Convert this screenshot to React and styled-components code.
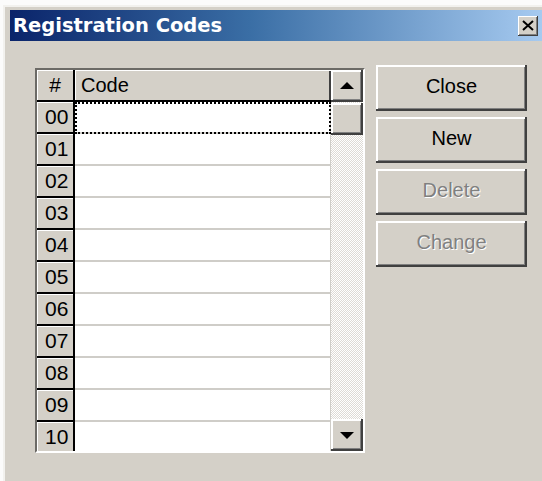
import React from "react";
import styled, { createGlobalStyle } from "styled-components";

const FACE = "#d4d0c8";

const codes = ["00", "01", "02", "03", "04", "05", "06", "07", "08", "09", "10"];

const GlobalStyle = createGlobalStyle`
  html, body {
    margin: 0;
    padding: 0;
    background: #fbfbfb;
    overflow: hidden;
  }
  body {
    font-family: "Liberation Sans", Arial, sans-serif;
  }
`;

const App = () => {
  return (
    <>
      <GlobalStyle />
      <Window>
        <TitleBar>
          <Title>Registration Codes</Title>
          <CloseBox>
            <svg width="12" height="11" viewBox="0 0 12 11">
              <path d="M1 1 L11 10 M11 1 L1 10" stroke="#000" strokeWidth="2" />
            </svg>
          </CloseBox>
        </TitleBar>
        <Body>
          <Grid>
            <Table>
              <Row>
                <Fixed $header>#</Fixed>
                <HeaderCell>Code</HeaderCell>
              </Row>
              {codes.map((c, i) => (
                <Row key={c}>
                  <Fixed>{c}</Fixed>
                  <Cell $focused={i === 0} />
                </Row>
              ))}
            </Table>
            <ScrollBar>
              <ScrollButton>
                <Arrow $up />
              </ScrollButton>
              <Thumb />
              <Track />
              <ScrollButton>
                <Arrow />
              </ScrollButton>
            </ScrollBar>
          </Grid>
          <Buttons>
            <Button>Close</Button>
            <Button>New</Button>
            <Button $disabled>Delete</Button>
            <Button $disabled>Change</Button>
          </Buttons>
        </Body>
      </Window>
    </>
  );
};

const Window = styled.div`
  margin: 5px 0 0 3px;
  width: 546px;
  height: 480px;
  box-sizing: border-box;
  padding: 5px 7px 0 7px;
  background: ${FACE};
  box-shadow: inset 2px 2px #f2f1ee;
`;

const TitleBar = styled.div`
  height: 31px;
  display: flex;
  align-items: center;
  justify-content: space-between;
  padding: 0 4px 0 3px;
  background: linear-gradient(to right, #0a246a 0%, #3a6ea5 45%, #a6caf0 100%);
`;

const Title = styled.span`
  color: #fff;
  font-family: "DejaVu Sans", Verdana, sans-serif;
  font-weight: bold;
  font-size: 19.5px;
`;

const CloseBox = styled.div`
  width: 20px;
  height: 20px;
  display: flex;
  align-items: center;
  justify-content: center;
  background: ${FACE};
  box-shadow: inset -1px -1px #404040, inset 1px 1px #fff, inset -2px -2px #808080;
`;

const Body = styled.div`
  display: flex;
  align-items: flex-start;
  gap: 11px;
  padding: 27px 0 0 25px;
`;

const Grid = styled.div`
  display: flex;
  width: 330px;
  height: 385px;
  box-sizing: border-box;
  border: 2px solid;
  border-color: #6c6a66 #fff #fff #6c6a66;
  box-shadow: inset 1px 1px #404040;
  background: #fff;
  overflow: hidden;
`;

const Table = styled.div`
  flex: 1;
  display: flex;
  flex-direction: column;
  overflow: hidden;
`;

const Row = styled.div`
  display: flex;
  flex: none;
  height: 32px;
`;

const Fixed = styled.div`
  width: 38px;
  flex: none;
  box-sizing: border-box;
  background: ${FACE};
  border-right: 2px solid #000;
  border-bottom: 2px solid #000;
  box-shadow: inset 1px 1px #fff;
  display: flex;
  align-items: center;
  justify-content: ${(p) => (p.$header ? "center" : "flex-start")};
  padding-left: ${(p) => (p.$header ? "0" : "8px")};
  font-size: 21px;
  color: #000;
`;

const HeaderCell = styled.div`
  flex: 1;
  box-sizing: border-box;
  background: ${FACE};
  border-bottom: 2px solid #000;
  box-shadow: inset 1px 1px #fff, inset -2px 0 #404040;
  display: flex;
  align-items: center;
  padding-left: 6px;
  font-size: 20px;
  color: #000;
`;

const Cell = styled.div`
  flex: 1;
  box-sizing: border-box;
  background: #fff;
  border-bottom: 2px solid #cfcdc8;
  border-right: 1px solid #cfcdc8;
  outline: ${(p) => (p.$focused ? "2px dotted #000" : "none")};
  outline-offset: -2px;
`;

const ScrollBar = styled.div`
  width: 32px;
  flex: none;
  display: flex;
  flex-direction: column;
  background: repeating-conic-gradient(#fff 0 25%, #dedbd5 0 50%) 0 0 / 2px 2px;
`;

const raised = `
  background: ${FACE};
  box-shadow: inset -2px -2px #404040, inset 2px 2px #fff, inset -3px -3px #808080;
`;

const ScrollButton = styled.div`
  height: 32px;
  flex: none;
  display: flex;
  align-items: center;
  justify-content: center;
  ${raised}
`;

const Thumb = styled.div`
  height: 32px;
  flex: none;
  margin-top: 1px;
  ${raised}
`;

const Track = styled.div`
  flex: 1;
`;

const Arrow = styled.div`
  width: 0;
  height: 0;
  border-left: 7px solid transparent;
  border-right: 7px solid transparent;
  ${(p) =>
    p.$up ? "border-bottom: 7px solid #000;" : "border-top: 7px solid #000;"}
  margin-top: ${(p) => (p.$up ? "-2px" : "0")};
`;

const Buttons = styled.div`
  display: flex;
  flex-direction: column;
  gap: 6px;
  margin-top: -3px;
`;

const Button = styled.div`
  width: 151px;
  height: 46px;
  box-sizing: border-box;
  display: flex;
  align-items: center;
  justify-content: center;
  padding-bottom: 3px;
  font-size: 20px;
  ${raised}
  color: ${(p) => (p.$disabled ? "#808080" : "#000")};
  text-shadow: ${(p) => (p.$disabled ? "1px 1px #fff" : "none")};
`;

export default App;
